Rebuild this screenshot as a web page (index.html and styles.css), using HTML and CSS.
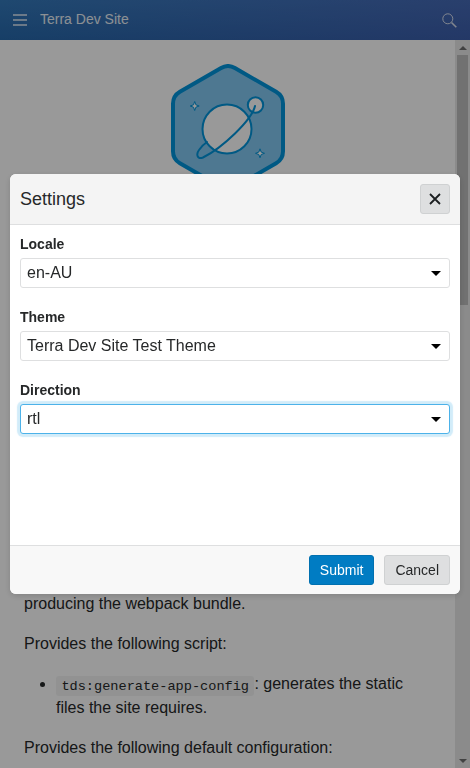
FILE: index.html
```html
<!DOCTYPE html>
<html lang="en">
<head>
    <meta charset="UTF-8">
    <meta name="viewport" content="width=device-width, initial-scale=1.0">
    <title>Terra Dev Site</title>
    <link rel="stylesheet" href="styles.css">
</head>
<body>

    <div class="app">
        <header class="topbar">
            <svg class="menu-icon" width="16" height="14" viewBox="0 0 16 14">
                <path d="M1 2h14M1 7h14M1 12h14" stroke="#fff" stroke-width="1.6" fill="none"/>
            </svg>
            <span class="site-title">Terra Dev Site</span>
            <svg class="search-icon" width="15" height="15" viewBox="0 0 15 15">
                <circle cx="5.800" cy="5.800" r="5" stroke="#fff" stroke-width="1" fill="none"/>
                <path d="M9.500 9.500l4.800 4.800" stroke="#fff" stroke-width="1.600" fill="none"/>
            </svg>
        </header>

        <div class="page">
            <main class="content">
                <div class="logo">
                    <svg width="116" height="132" viewBox="0 0 116 132">
                        <path d="M51.100 4Q58 0 64.900 4L106.100 27.800Q113 31.800 113 39.800L113 87.200Q113 95.200 106.100 99.200L64.900 123Q58 127 51.100 123L9.900 99.200Q3 95.200 3 87.200L3 39.800Q3 31.800 9.900 27.800Z" fill="#83c8f2" stroke="#0095dc" stroke-width="4"/>
                        <circle cx="57" cy="65" r="24.500" fill="#fff" stroke="#0095dc" stroke-width="2"/>
                        <circle cx="85.500" cy="41" r="7.700" fill="#fff" stroke="#0095dc" stroke-width="2"/>
                        <path d="M85 42C82 56 52 84 33 93.500C27 96 26 90 29 86C31 83 34 80 37 78" fill="none" stroke="#0095dc" stroke-width="2" stroke-linecap="round"/>
                        <path d="M24.700 37.500l1.200 3.300 3.300 1.200-3.300 1.200-1.200 3.300-1.200-3.300-3.300-1.200 3.300-1.200z" fill="#fff" stroke="#0095dc" stroke-width="1"/>
                        <path d="M90 84.800l1.200 3.300 3.300 1.200-3.300 1.200-1.200 3.300-1.200-3.300-3.300-1.200 3.300-1.200z" fill="#fff" stroke="#0095dc" stroke-width="1"/>
                    </svg>
                </div>
                <div class="hidden-block"></div>
                <p>producing the webpack bundle.</p>
                <p>Provides the following script:</p>
                <ul>
                    <li><code>tds:generate-app-config</code>: generates the static files the site requires.</li>
                </ul>
                <p>Provides the following default configuration:</p>
            </main>

            <div class="scrollbar">
                <span class="arrow arrow-up"></span>
                <div class="thumb"></div>
                <span class="arrow arrow-down"></span>
            </div>
        </div>
    </div>

    <!-- settings dialog -->
    <div class="overlay">
        <div class="modal">
            <div class="modal-header">
                <h1>Settings</h1>
                <button class="close-btn" aria-label="Close">
                    <svg width="12" height="12" viewBox="0 0 12 12">
                        <path d="M1 1l10 10M11 1L1 11" stroke="#1c1f21" stroke-width="1.800" fill="none"/>
                    </svg>
                </button>
            </div>
            <div class="modal-body">
                <div class="field">
                    <label>Locale</label>
                    <div class="select">en-AU<span class="caret"></span></div>
                </div>
                <div class="field">
                    <label>Theme</label>
                    <div class="select">Terra Dev Site Test Theme<span class="caret"></span></div>
                </div>
                <div class="field">
                    <label>Direction</label>
                    <div class="select focused">rtl<span class="caret"></span></div>
                </div>
            </div>
            <div class="modal-footer">
                <button class="btn btn-primary">Submit</button>
                <button class="btn">Cancel</button>
            </div>
        </div>
    </div>

</body>
</html>
```

FILE: styles.css
```css
* {
    box-sizing: border-box;
}

html, body {
    height: 100%;
}

body {
    margin: 0;
    font-family: "Liberation Sans", Arial, sans-serif;
    font-size: 16px;
    line-height: 24px;
    color: #262829;
    background-color: #fff;
    overflow: hidden;
}

.app {
    height: 768px;
    display: flex;
    flex-direction: column;
}

.topbar {
    height: 40px;
    flex-shrink: 0;
    display: flex;
    align-items: center;
    padding: 0 12px 0 12px;
    color: #fff;
    background: linear-gradient(to right, rgba(110, 70, 170, 0), rgba(110, 70, 170, 0.3)), linear-gradient(#3479bb, #2668ab);
}

.menu-icon {
    margin-right: 12px;
    opacity: 0.85;
}

.site-title {
    flex: 1;
    font-size: 14px;
    line-height: 38px;
    height: 40px;
    opacity: 0.9;
}

.search-icon {
    margin-right: 1px;
    opacity: 0.8;
}

.page {
    flex: 1;
    min-height: 0;
    display: flex;
}

.content {
    flex: 1;
    min-width: 0;
    overflow: hidden;
    padding: 24px 24px 0;
}

.logo {
    display: flex;
    justify-content: center;
    padding-left: 1px;
}

.hidden-block {
    height: 396px;
}

p {
    margin: 0 0 16px;
}

ul {
    margin: 0 0 16px;
    padding-left: 32px;
}

li {
    padding-right: 20px;
}

code {
    font-family: "Liberation Mono", monospace;
    font-size: 13.6px;
    line-height: 1;
    padding: 2.5px 5.4px;
    border-radius: 3px;
    background-color: rgba(27, 31, 35, 0.05);
}

.scrollbar {
    width: 15px;
    flex-shrink: 0;
    display: flex;
    flex-direction: column;
    align-items: center;
    background-color: #e8e8e8;
}

.thumb {
    width: 11px;
    height: 250px;
    margin-top: 5px;
    margin-bottom: auto;
    background-color: #bcbcbc;
}

.arrow {
    width: 0;
    height: 0;
    flex-shrink: 0;
    border-left: 4px solid transparent;
    border-right: 4px solid transparent;
}

.arrow-up {
    margin-top: 6px;
    border-bottom: 4px solid #6e6e6e;
}

.arrow-down {
    margin-bottom: 5px;
    border-top: 4px solid #6e6e6e;
}

.overlay {
    position: fixed;
    top: 0;
    left: 0;
    right: 0;
    bottom: 0;
    padding: 174px 10px;
    background-color: rgba(0, 0, 0, 0.4);
}

.modal {
    height: 420px;
    display: flex;
    flex-direction: column;
    background-color: #fff;
    border-radius: 6px;
    overflow: hidden;
    box-shadow: 0 2px 6px rgba(0, 0, 0, 0.15);
}

.modal-header {
    height: 51px;
    flex-shrink: 0;
    display: flex;
    align-items: center;
    justify-content: space-between;
    padding: 0 10px;
    background-color: #f4f4f4;
    border-bottom: 1px solid #dedfe0;
}

.modal-header h1 {
    margin: 0;
    font-size: 18px;
    font-weight: normal;
}

.close-btn {
    width: 30px;
    height: 30px;
    display: flex;
    align-items: center;
    justify-content: center;
    padding: 0;
    background-color: #dedfe0;
    border: 1px solid #cfd1d2;
    border-radius: 3px;
}

.modal-body {
    flex: 1;
    padding: 7px 10px 0;
}

.field {
    margin-bottom: 17px;
}

.field label {
    display: block;
    font-size: 14px;
    font-weight: bold;
    line-height: 24px;
    margin-bottom: 2px;
}

.select {
    height: 30px;
    display: flex;
    align-items: center;
    justify-content: space-between;
    padding: 0 8px 0 6px;
    background-color: #fff;
    border: 1px solid #dedfe0;
    border-radius: 3px;
}

.select.focused {
    border-color: #4cb2e9;
    box-shadow: 0 0 1px 3px rgba(76, 178, 233, 0.25);
}

.caret {
    width: 0;
    height: 0;
    border-left: 5.500px solid transparent;
    border-right: 5.500px solid transparent;
    border-top: 5px solid #000;
}

.modal-footer {
    height: 49px;
    flex-shrink: 0;
    display: flex;
    align-items: center;
    justify-content: flex-end;
    gap: 10px;
    padding: 0 10px;
    background-color: #f8f8f8;
    border-top: 1px solid #dedfe0;
}

.btn {
    height: 30px;
    padding: 0 10px;
    font-family: inherit;
    font-size: 14px;
    color: #262829;
    background-color: #dedfe0;
    border: 1px solid #cfd1d2;
    border-radius: 3px;
}

.btn-primary {
    color: #fff;
    background-color: #007cc3;
    border-color: #0070b0;
}
```
